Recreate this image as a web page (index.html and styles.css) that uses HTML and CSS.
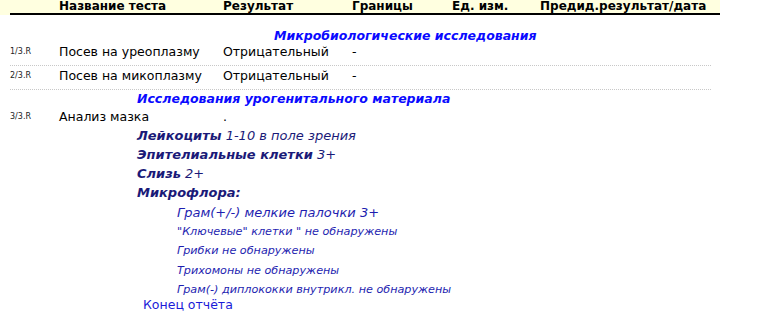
FILE: index.html
```html
<!DOCTYPE html>
<html lang="ru">
<head>
<meta charset="utf-8">
<link rel="stylesheet" href="styles.css">
</head>
<body>
<div class="report">
  <div class="head-bg">
    <div class="grid head">
      <span></span>
      <span>Название теста</span>
      <span>Результат</span>
      <span>Границы</span>
      <span>Ед. изм.</span>
      <span>Предид.результат/дата</span>
    </div>
  </div>

  <div class="section s1">Микробиологические исследования</div>
  <div class="grid row">
    <span class="code">1/3.R</span>
    <span>Посев на уреоплазму</span>
    <span>Отрицательный</span>
    <span>-</span>
    <span></span>
    <span></span>
  </div>
  <div class="grid row">
    <span class="code">2/3.R</span>
    <span>Посев на микоплазму</span>
    <span>Отрицательный</span>
    <span>-</span>
    <span></span>
    <span></span>
  </div>

  <div class="section s2">Исследования урогенитального материала</div>
  <div class="grid row plain">
    <span class="code">3/3.R</span>
    <span>Анализ мазка</span>
    <span>.</span>
    <span></span>
    <span></span>
    <span></span>
  </div>

  <div class="details">
    <div class="line"><b>Лейкоциты</b> 1-10 в поле зрения</div>
    <div class="line"><b>Эпителиальные клетки</b> 3+</div>
    <div class="line"><b>Слизь</b> 2+</div>
    <div class="line"><b>Микрофлора:</b></div>
    <div class="line sub">Грам(+/-) мелкие палочки 3+</div>
    <div class="line sub small">"Ключевые" клетки " не обнаружены</div>
    <div class="line sub small">Грибки не обнаружены</div>
    <div class="line sub small">Трихомоны не обнаружены</div>
    <div class="line sub small">Грам(-) диплококки внутрикл. не обнаружены</div>
  </div>
  <div class="end">Конец отчёта</div>
</div>
</body>
</html>
```

FILE: styles.css
```css
html, body {
  margin: 0;
  padding: 0;
  background: #ffffff;
}

body {
  font-family: "DejaVu Sans", Verdana, sans-serif;
  font-size: 12.5px;
  color: #000000;
}

.report {
  width: 720px;
}

.head-bg {
  background: #ffffe0;
  padding-left: 10px;
}

.grid {
  display: grid;
  grid-template-columns: 49px 164px 129px 100px 88px 180px;
}

.head {
  font-weight: bold;
  font-size: 12px;
  line-height: 13px;
  border-bottom: 2px solid #000000;
  white-space: nowrap;
}

.section {
  font-weight: bold;
  font-style: italic;
  color: #0a0aff;
  white-space: nowrap;
}

.s1 {
  padding: 14px 0 0 274px;
  line-height: 13px;
}

.s2 {
  padding: 1px 0 0 137px;
  line-height: 16px;
}

.row {
  margin-left: 10px;
  width: 701px;
  padding: 2px 0 5px;
  line-height: 16px;
  border-bottom: 1px dotted #c8c8c8;
  white-space: nowrap;
}

.row.plain {
  border-bottom: none;
  padding-bottom: 0;
}

.code {
  font-size: 8px;
  color: #222222;
}

.details {
  padding: 0.5px 0 0 137px;
  font-style: italic;
  color: #1a1a78;
  font-size: 13px;
}

.line {
  line-height: 19.3px;
  white-space: nowrap;
}

.line b {
  font-weight: bold;
}

.sub {
  padding-left: 40px;
  color: #1e1eb0;
}

.small {
  font-size: 11.2px;
}

.end {
  padding-left: 143px;
  line-height: 12px;
  color: #1a1ad8;
}
```
